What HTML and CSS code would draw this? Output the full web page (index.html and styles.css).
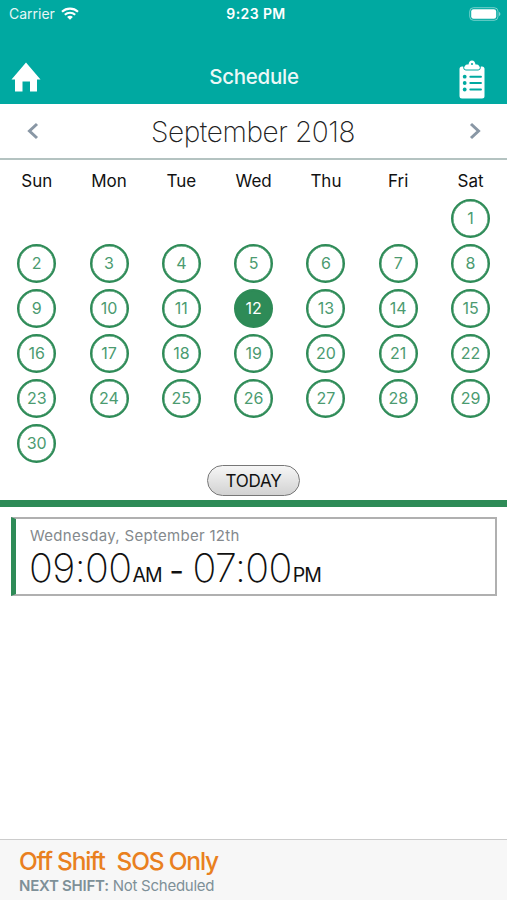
FILE: index.html
```
<!DOCTYPE html>
<html lang="en">
<head>
  <meta charset="UTF-8" />
  <meta name="viewport" content="width=device-width, initial-scale=1.0"/>
  <title>Schedule</title>
  <link rel="stylesheet" href="styles.css">
</head>
<body>

  <!-- Header -->
  <header class="header">
    <div class="status-bar">
      <div class="carrier">
        <span class="carrier-name">Carrier</span>
        <svg class="wifi" viewBox="0 0 18 13" width="18" height="13">
          <path d="M1 4.8C5.5.6 12.5.6 17 4.8M3.8 7.7c3-2.7 7.4-2.7 10.4 0" fill="none" stroke="#fff" stroke-width="2.1"/>
          <path d="M6.1 9.9c1.7-1.5 4.1-1.5 5.8 0L9 12.8z" fill="#fff"/>
        </svg>
      </div>
      <span class="clock">9:23 PM</span>
      <svg class="battery" viewBox="0 0 32 14" width="32" height="14">
        <rect x=".7" y=".7" width="28.3" height="12.6" rx="3.8" fill="none" stroke="#fff" stroke-opacity=".45"/>
        <rect x="2.2" y="2.2" width="25" height="9.6" rx="2.3" fill="#fff"/>
        <path d="M30 5c1.8.5 1.8 3.5 0 4z" fill="#fff" fill-opacity=".5"/>
      </svg>
    </div>
    <div class="nav-bar">
      <svg class="home" viewBox="0 0 30 30" width="30" height="30">
        <path d="M15 .5L29.5 17.5H26V29.5H19V19.5H11.5V29.5H4V17.5H.5z" fill="#fff"/>
      </svg>
      <h1>Schedule</h1>
      <svg class="clipboard" viewBox="0 0 26 39" width="26" height="39">
        <path d="M3 6.5H23Q25.5 6.5 25.5 9V36Q25.5 38.5 23 38.5H3Q.5 38.5 .5 36V9Q.5 6.5 3 6.5z" fill="#fff"/>
        <path d="M4.7 6v1.8q0 2.2 2.2 2.2h12.2q2.2 0 2.2-2.2V6" fill="none" stroke="#00a9a1" stroke-width="1"/>
        <path d="M6 8V6.3Q6 4.6 8 4.6h1.5C10 2 11 .5 13 .5s3 1.5 3.5 4.1H18q2 0 2 1.7V8q0 1-1 1H7Q6 9 6 8z" fill="#fff"/>
        <circle cx="13" cy="4" r="1" fill="#00a9a1"/>
        <g fill="#00a9a1">
          <circle cx="5.7" cy="16.7" r="1.9"/>
          <circle cx="5.7" cy="23" r="1.9"/>
          <circle cx="5.7" cy="29.5" r="1.9"/>
        </g>
        <path d="M11.3 16.7H22M11.3 23H22M11.3 29.5H22" stroke="#00a9a1" stroke-width="1.9" stroke-linecap="round"/>
      </svg>
    </div>
  </header>

  <!-- Month -->
  <div class="month-bar">
    <svg viewBox="0 0 12 18" width="12" height="18"><path d="M10 2L2.5 9l7.5 7" class="arrow"/></svg>
    <h2>September 2018</h2>
    <svg viewBox="0 0 12 18" width="12" height="18"><path d="M2 2l7.500 7L2 16" class="arrow"/></svg>
  </div>

  <!-- Calendar -->
  <div class="calendar">
    <div class="weekdays">
      <span>Sun</span><span>Mon</span><span>Tue</span><span>Wed</span><span>Thu</span><span>Fri</span><span>Sat</span>
    </div>
    <div class="days">
      <span class="day first">1</span>
      <span class="day">2</span>
      <span class="day">3</span>
      <span class="day">4</span>
      <span class="day">5</span>
      <span class="day">6</span>
      <span class="day">7</span>
      <span class="day">8</span>
      <span class="day">9</span>
      <span class="day">10</span>
      <span class="day">11</span>
      <span class="day selected">12</span>
      <span class="day">13</span>
      <span class="day">14</span>
      <span class="day">15</span>
      <span class="day">16</span>
      <span class="day">17</span>
      <span class="day">18</span>
      <span class="day">19</span>
      <span class="day">20</span>
      <span class="day">21</span>
      <span class="day">22</span>
      <span class="day">23</span>
      <span class="day">24</span>
      <span class="day">25</span>
      <span class="day">26</span>
      <span class="day">27</span>
      <span class="day">28</span>
      <span class="day">29</span>
      <span class="day">30</span>
    </div>
    <button class="today">TODAY</button>
  </div>

  <!-- Shift -->
  <div class="shift">
    <p class="shift-date">Wednesday, September 12th</p>
    <p class="shift-time">
      <span class="time">09:00</span><span class="ampm">AM</span><span class="dash">-</span><span class="time">07:00</span><span class="ampm">PM</span>
    </p>
  </div>

  <!-- Footer -->
  <footer class="footer">
    <p class="status"><span>Off Shift</span><span>SOS Only</span></p>
    <p class="next"><strong>NEXT SHIFT:</strong> Not Scheduled</p>
  </footer>

</body>
</html>
```
FILE: styles.css
```
* {
  box-sizing: border-box;
  margin: 0;
  padding: 0;
}

body {
  font-family: Inter, "Liberation Sans", sans-serif;
  background: #fff;
  color: #111;
  height: 100vh;
  display: flex;
  flex-direction: column;
  overflow: hidden;
}

.header {
  background: #00a9a1;
  color: #fff;
  height: 104px;
}

.status-bar {
  display: grid;
  grid-template-columns: 1fr auto 1fr;
  align-items: center;
  height: 27px;
  padding: 0 6px 0 9px;
}

.carrier {
  display: flex;
  align-items: center;
  gap: 6px;
  font-size: 14px;
}

.carrier-name {
  opacity: 0.9;
}

.clock {
  font-size: 14px;
  font-weight: 600;
  letter-spacing: 0.4px;
  padding-left: 2px;
}

.battery {
  justify-self: end;
}

.nav-bar {
  display: grid;
  grid-template-columns: 1fr auto 1fr;
  align-items: center;
  height: 77px;
  padding: 23px 22px 0 11px;
}

.nav-bar h1 {
  font-size: 20.5px;
  font-weight: 500;
  letter-spacing: -0.3px;
  padding: 0 0 2px 12px;
  opacity: 0.92;
}

.clipboard {
  justify-self: end;
  margin-top: 4px;
}

.month-bar {
  display: flex;
  align-items: center;
  justify-content: space-between;
  height: 56px;
  padding: 0 26px 0 27px;
  border-bottom: 2px solid #b4c3c1;
}

.month-bar h2 {
  font-size: 28px;
  font-weight: 200;
  letter-spacing: -0.4px;
  padding: 1px 2px 0 0;
  color: #222;
}

.arrow {
  fill: none;
  stroke: #8997a5;
  stroke-width: 3;
}

.calendar {
  height: 347px;
  border-bottom: 7px solid #2e8b57;
  text-align: center;
}

.weekdays,
.days {
  display: grid;
  grid-template-columns: repeat(7, 72.3px);
  padding-left: 0.6px;
  justify-items: center;
}

.weekdays {
  height: 36px;
  line-height: 43px;
  font-size: 17px;
}

.days {
  grid-auto-rows: 45px;
  align-items: center;
}

.day {
  width: 39px;
  height: 39px;
  line-height: 35px;
  border: 2px solid #2e8b57;
  box-shadow: inset 0 0 0 0.5px #2e8b57;
  border-radius: 50%;
  color: #4b9b70;
  font-size: 16px;
}

.first {
  grid-column: 7;
}

.selected {
  background: #2e8b57;
  color: #fff;
}

.today {
  display: block;
  width: 93px;
  height: 31px;
  margin: -1px auto 0;
  border: 1.5px solid #777;
  border-radius: 16px;
  background: linear-gradient(#f6f6f6, #d2d2d2);
  font: 17px Inter, "Liberation Sans", sans-serif;
  letter-spacing: -0.2px;
  color: #111;
}

.shift {
  margin: 10px 10px 0 11px;
  height: 79px;
  border: 2px solid #b0b0b0;
  border-left: 5px solid #2e8b57;
  padding: 7px 0 0 14px;
}

.shift-date {
  font-size: 15px;
  line-height: 20px;
  letter-spacing: 0.3px;
  color: #84898d;
}

.shift-time {
  display: flex;
  align-items: baseline;
  line-height: 44px;
}

.time {
  font-size: 39.5px;
  font-weight: 200;
  letter-spacing: -0.6px;
}

.time:first-child {
  margin-left: -1px;
}

.ampm {
  width: 29px;
  padding-left: 1px;
  font-size: 19.5px;
  letter-spacing: -0.9px;
}

.dash {
  width: 32px;
  font-size: 32px;
  text-align: center;
}

.footer {
  margin-top: auto;
  height: 61px;
  background: #f7f7f7;
  border-top: 1px solid #ccc;
  padding: 6px 19px 0;
}

.status {
  display: flex;
  gap: 12px;
  font-size: 24.5px;
  font-weight: 500;
  line-height: 31px;
  letter-spacing: -1.2px;
  color: #e98020;
}

.next {
  font-size: 15px;
  line-height: 18px;
  letter-spacing: -0.25px;
  color: #7e9098;
}

.next strong {
  font-weight: 600;
}
```
